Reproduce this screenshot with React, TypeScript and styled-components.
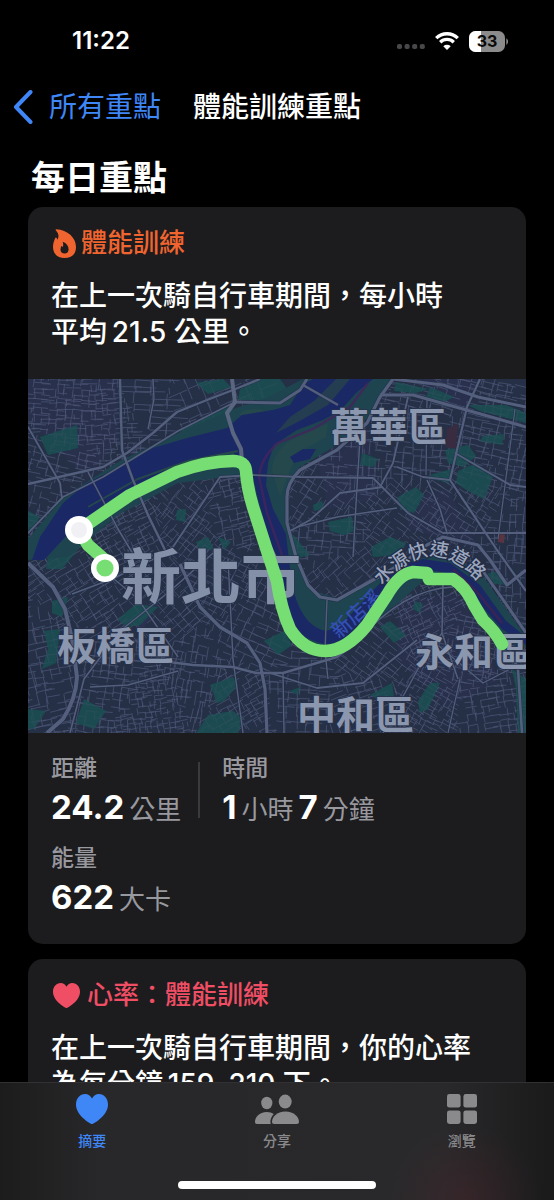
import React from 'react';
import styled, { createGlobalStyle } from 'styled-components';

const GlobalStyle = createGlobalStyle`
  *, *::before, *::after { box-sizing: border-box; }
  body {
    margin: 0;
    background: #000;
    color: #fff;
    font-family: "Inter", "Noto Sans CJK TC", sans-serif;
    -webkit-font-smoothing: antialiased;
  }
`;

const Screen = styled.div`
  display: flex;
  flex-direction: column;
  height: 100vh;
  background: #000;
`;

const StatusBar = styled.div`
  flex: none;
  display: flex;
  align-items: center;
  justify-content: space-between;
  height: 82px;
  padding: 0 46px 0 72px;
`;

const Clock = styled.time`
  font-size: 24px;
  font-weight: 600;
  line-height: 28px;
`;

const StatusIcons = styled.div`
  display: flex;
  align-items: center;
  gap: 10px;
`;

const NavBar = styled.nav`
  flex: none;
  display: flex;
  align-items: center;
  gap: 32px;
  height: 50px;
  padding: 0 13px;
`;

const BackLink = styled.a`
  display: flex;
  align-items: center;
  gap: 16px;
  color: #3f86f7;
  font-size: 28px;
  line-height: 40px;
  text-decoration: none;
`;

const NavTitle = styled.h1`
  margin: 0;
  font-size: 28px;
  font-weight: 500;
  line-height: 40px;
`;

const Content = styled.main`
  flex: 1;
  min-height: 0;
  overflow-y: auto;
  scrollbar-width: none;
  padding: 20px 28px 0;
`;

const SectionTitle = styled.h2`
  margin: 0 0 3px 3px;
  font-size: 34px;
  font-weight: 700;
  line-height: 52px;
`;

const Card = styled.article`
  margin-bottom: 15px;
  overflow: hidden;
  border-radius: 15px;
  background: #1c1c1e;
`;

const CardText = styled.div`
  padding: 20px 23px 29px;
`;

const CardTitle = styled.h3<{ $color: string; $gap: number }>`
  display: flex;
  align-items: center;
  gap: ${(p) => p.$gap}px;
  margin: 0 0 19px;
  padding-left: 2px;
  color: ${(p) => p.$color};
  font-size: 26px;
  font-weight: 500;
  line-height: 32px;
`;

const Summary = styled.p`
  margin: 0;
  font-size: 28px;
  font-weight: 500;
  line-height: 36px;
`;

const MapDrawing = styled.svg`
  display: block;
  width: 100%;
  height: auto;
  font-family: "Noto Sans CJK TC", sans-serif;
`;

const Stats = styled.dl`
  display: flex;
  flex-wrap: wrap;
  gap: 18px 0;
  margin: 0;
  padding: 22px 23px 27px;
`;

const Stat = styled.div<{ $wide?: boolean }>`
  flex: ${(p) => (p.$wide ? '1 0 60%' : 'none')};
`;

const StatDivider = styled.div`
  width: 2px;
  height: 56px;
  margin: 7px 22px 0 17px;
  background: #3a3a3c;
`;

const StatLabel = styled.dt`
  margin-bottom: 6px;
  color: #98989f;
  font-size: 23px;
  font-weight: 500;
  line-height: 26px;
`;

const StatValue = styled.dd`
  display: flex;
  align-items: baseline;
  height: 40px;
  margin: 0;
  line-height: 40px;
`;

const Amount = styled.span`
  font-size: 33px;
  font-weight: 700;
`;

const Unit = styled.span`
  margin: 0 5px;
  color: #98989f;
  font-size: 26px;

  &:last-child { margin-right: 0; }
`;

const TabBar = styled.footer`
  flex: none;
  border-top: 1px solid #313133;
  background:
    radial-gradient(circle at 84% 100%, rgba(90, 36, 44, 0.3), transparent 76px),
    linear-gradient(90deg, #1c1c1d, #28282a 18%, #29292b 80%, #1a1a1b);
`;

const Tabs = styled.nav`
  display: flex;
`;

const Tab = styled.button<{ $active?: boolean }>`
  flex: 1;
  display: flex;
  flex-direction: column;
  align-items: center;
  gap: 7px;
  padding: 11px 0 0;
  border: 0;
  background: none;
  color: ${(p) => (p.$active ? '#3f86f7' : '#8a8a8c')};
  font-family: inherit;
  font-size: 14px;
  font-weight: 500;
  line-height: 20px;
`;

const HomeIndicator = styled.div`
  width: 198px;
  height: 8px;
  margin: 30px auto 11px;
  border-radius: 4px;
  background: #fff;
`;

const HEART =
  'M16 30C13.5 29.3 0 21.2 0 10.4C0 4.3 4 0 9 0C12.1 0 14.7 1.7 16 4.6C17.3 1.7 19.9 0 23 0C28 0 32 4.3 32 10.4C32 21.2 18.5 29.3 16 30Z';

const HeartIcon = ({ width, height }: { width: number; height: number }) => (
  <svg width={width} height={height} viewBox="0 0 32 30" preserveAspectRatio="none" fill="currentColor" aria-hidden="true">
    <path d={HEART} />
  </svg>
);

const FlameIcon = () => (
  <svg width="23" height="29" viewBox="0 0 23 29" fill="currentColor" fillRule="evenodd" aria-hidden="true">
    <path d="M3.4 0.2C14.5 0.8 23 8.6 23 17.9C23 25 18.8 29 11.6 29C4.4 29 0 24.8 0 18C0 14.2 1.3 11.7 2.1 9.3C2.5 8.1 3.4 8.2 3.8 9.2L4.5 10.7C6.4 7.4 5.4 4 3.1 1.7C2.3 0.9 2.5 0.2 3.4 0.2ZM10.4 13C13.6 14.3 15.6 17.4 15.6 20.2C15.6 22.9 14 24.6 11.6 24.6C9.1 24.6 7.5 23 7.5 20.6C7.5 19.3 7.9 18.3 8.4 17.3C8.6 16.9 8.9 16.9 9.1 17.3L9.6 18.2C10.4 16.8 10.4 15.1 9.9 13.7C9.7 13.2 9.9 12.8 10.4 13Z" />
  </svg>
);

const PeopleIcon = () => (
  <svg width="44" height="30" viewBox="0 0 44 30" fill="currentColor" aria-hidden="true">
    <ellipse cx="11.8" cy="9" rx="5.6" ry="6.2" />
    <ellipse cx="30.2" cy="7.6" rx="6.5" ry="7" />
    <path d="M2 30C0.6 30 0 29.2 0 28C0 23.5 4.2 18 11.8 18C14.8 18 17 18.8 18.8 20.1C16.7 22.3 15.4 25.2 15.4 28C15.4 28.8 15.6 29.4 15.9 30Z" />
    <path d="M19.3 30C17.7 30 17 29.2 17 27.8C17 23.3 21.8 17.5 30.4 17.5C39.1 17.5 44 23.3 44 27.8C44 29.2 43.2 30 41.6 30Z" />
  </svg>
);

const GridIcon = () => (
  <svg width="30" height="30" viewBox="0 0 30 30" fill="currentColor" aria-hidden="true">
    <rect width="13.6" height="13.6" rx="2.4" />
    <rect x="16.4" width="13.6" height="13.6" rx="2.4" />
    <rect y="16.4" width="13.6" height="13.6" rx="2.4" />
    <rect x="16.4" y="16.4" width="13.6" height="13.6" rx="2.4" />
  </svg>
);

const CellularDots = () => (
  <svg width="28" height="18" viewBox="0 0 28 18" fill="#48484a" aria-hidden="true">
    {[0, 7.6, 15.2, 22.8].map((x) => (
      <rect key={x} x={x} y="12" width="5" height="5" rx="1.8" />
    ))}
  </svg>
);

const WifiIcon = () => (
  <svg width="24" height="18" viewBox="0 0 24 18" fill="none" stroke="#fff" strokeWidth="3.3" aria-hidden="true">
    <path d="M1.2 6.1A15.6 15.6 0 0 1 22.8 6.1" />
    <path d="M5.2 10.2A9.8 9.8 0 0 1 18.8 10.2" />
    <path d="M8.3 14.2A5.4 5.4 0 0 1 15.7 14.2L12 18Z" fill="#fff" stroke="none" />
  </svg>
);

const BatteryIcon = () => (
  <svg width="39" height="21" viewBox="0 0 39 21" role="img" aria-label="33%">
    <defs>
      <clipPath id="battery-shape">
        <rect width="36" height="21" rx="6.5" />
      </clipPath>
    </defs>
    <g clipPath="url(#battery-shape)">
      <rect width="36" height="21" fill="#8b8b8b" />
      <rect width="12" height="21" fill="#fff" />
    </g>
    <path d="M37.3 7.2C38.6 8 39 9.2 39 10.5S38.6 13 37.3 13.8Z" fill="#8b8b8b" />
    <text x="18" y="16.4" textAnchor="middle" fontFamily="Inter, sans-serif" fontSize="16" fontWeight="700" fill="#0a0a0a">
      33
    </text>
  </svg>
);

const BackChevron = () => (
  <svg width="20" height="34" viewBox="0 0 20 34" fill="none" stroke="currentColor" strokeWidth="4" strokeLinecap="round" strokeLinejoin="round" aria-hidden="true">
    <path d="M17.5 2L3 17L17.5 32" />
  </svg>
);

/* Street grids: each district fills the area nearest to its centre. */
type District = { x: number; y: number; angle: number; w: number; h: number };

const districts: District[] = [
  { x: 35, y: 25, angle: 2, w: 8, h: 5 },
  { x: 85, y: 45, angle: -3, w: 6, h: 5 },
  { x: 125, y: 30, angle: 3, w: 17, h: 6 },
  { x: 170, y: 22, angle: -22, w: 11, h: 14 },
  { x: 25, y: 95, angle: 14, w: 9, h: 6 },
  { x: 95, y: 150, angle: -28, w: 7, h: 5 },
  { x: 165, y: 140, angle: 38, w: 6, h: 7 },
  { x: 205, y: 130, angle: -14, w: 8, h: 5 },
  { x: 70, y: 215, angle: -33, w: 9, h: 6 },
  { x: 130, y: 225, angle: 48, w: 7, h: 10 },
  { x: 200, y: 205, angle: 28, w: 8, h: 6 },
  { x: 20, y: 290, angle: -12, w: 9, h: 7 },
  { x: 85, y: 300, angle: 8, w: 8, h: 7 },
  { x: 125, y: 322, angle: -8, w: 6, h: 5 },
  { x: 165, y: 300, angle: 10, w: 5, h: 9 },
  { x: 210, y: 320, angle: -30, w: 8, h: 6 },
  { x: 270, y: 318, angle: 4, w: 10, h: 8 },
  { x: 225, y: 255, angle: 24, w: 10, h: 7 },
  { x: 300, y: 120, angle: 32, w: 7, h: 8 },
  { x: 320, y: 85, angle: 3, w: 6, h: 9 },
  { x: 385, y: 55, angle: 5, w: 9, h: 7 },
  { x: 400, y: 10, angle: 14, w: 11, h: 6 },
  { x: 470, y: 75, angle: 12, w: 8, h: 6 },
  { x: 365, y: 150, angle: 38, w: 8, h: 6 },
  { x: 310, y: 155, angle: 4, w: 8, h: 7 },
  { x: 440, y: 135, angle: 32, w: 7, h: 6 },
  { x: 480, y: 165, angle: 3, w: 7, h: 8 },
  { x: 325, y: 195, angle: -40, w: 8, h: 7 },
  { x: 390, y: 235, angle: -25, w: 6, h: 5 },
  { x: 345, y: 275, angle: 38, w: 9, h: 6 },
  { x: 400, y: 325, angle: 30, w: 7, h: 5 },
  { x: 445, y: 275, angle: 12, w: 7, h: 5 },
  { x: 460, y: 330, angle: -10, w: 8, h: 6 },
  { x: 340, y: 325, angle: -18, w: 9, h: 7 },
];

const createRandom = (seed: number) => {
  let state = seed;
  return () => {
    state = (state * 1664525 + 1013904223) % 4294967296;
    return state / 4294967296;
  };
};

const nearest = (x: number, y: number) => {
  let best = 0;
  let min = Infinity;
  districts.forEach((d, i) => {
    const dist = (d.x - x) ** 2 + (d.y - y) ** 2;
    if (dist < min) {
      min = dist;
      best = i;
    }
  });
  return best;
};

const buildStreets = () => {
  const random = createRandom(41);
  const parts: string[] = [];
  districts.forEach((d, index) => {
    const rad = (d.angle * Math.PI) / 180;
    const at = (u: number, v: number) => [
      d.x + u * Math.cos(rad) - v * Math.sin(rad),
      d.y + u * Math.sin(rad) + v * Math.cos(rad),
    ];
    const add = (u: number, v: number, du: number, dv: number) => {
      const [mx, my] = at(u + du / 2, v + dv / 2);
      if (mx < -6 || mx > 504 || my < -6 || my > 360 || nearest(mx, my) !== index) return;
      const [x1, y1] = at(u, v);
      const [x2, y2] = at(u + du, v + dv);
      parts.push(`M${x1.toFixed(1)} ${y1.toFixed(1)}L${x2.toFixed(1)} ${y2.toFixed(1)}`);
    };
    for (let u = -70; u < 70; u += d.w) {
      for (let v = -70; v < 70; v += d.h) {
        const shift = (random() - 0.5) * 3;
        if (random() < 0.66) add(u, v + shift, d.w * (1 + random()), (random() - 0.5) * 2);
        if (random() < 0.56) add(u + shift, v, (random() - 0.5) * 2, d.h * (1 + random()));
      }
    }
  });
  return parts.join('');
};

const streets = buildStreets();

const parks = [
  'M12 58L49 46L50 69L20 76Z',
  'M168 4L195 0L203 8L180 15Z',
  'M212 10L232 0L252 0L262 14L250 22L210 21Z',
  'M150 52L200 28L202 46L170 56Z',
  'M0 132L12 138L4 150L0 152Z',
  'M20 178L45 160L52 168L34 190L18 190Z',
  'M149 131L158 130L157 143L148 141Z',
  'M168 163L180 158L186 170L172 172Z',
  'M190 158L203 163L196 171Z',
  'M16 252L32 250L28 284L14 290L20 270Z',
  'M90 240L108 225L130 228L112 246L98 248Z',
  'M56 320L78 332L66 350L48 344Z',
  'M0 330L18 332L6 350L0 350Z',
  'M182 306L205 298L210 306L196 322L188 324L186 316Z',
  'M168 354L180 336L205 332L215 340L210 354Z',
  'M24 222L40 218L34 238L24 234Z',
  'M236 262L256 252L264 266L250 276Z',
  'M334 74L350 80L345 88L332 86Z',
  'M370 118L388 108L396 116L386 134L372 130Z',
  'M300 143L324 138L326 152L316 156L302 152Z',
  'M343 168L362 158L378 164L372 176L345 178Z',
  'M282 176L262 152L256 160L262 181Z',
  'M368 3L400 10L388 14L366 12Z',
  'M402 8L426 18L416 23L398 18Z',
  'M440 26L478 26L498 34L498 44L452 32Z',
  'M455 57L476 55L474 66L452 62Z',
  'M417 71L440 66L448 77L436 88L420 84Z',
  'M430 92L448 84L465 98L456 120L440 112L428 104Z',
  'M402 96L424 90L421 104L404 100Z',
  'M352 248L362 242L378 256L366 264Z',
  'M390 322L402 304L412 304L400 330L392 334Z',
  'M342 316L364 304L366 318L350 320Z',
  'M387 222L395 225L392 234L385 230Z',
  'M455 196L470 192L478 206L462 204Z',
  'M484 290L498 300L498 354L490 354L488 310Z',
  'M262 312L272 308L270 316Z',
  'M285 126L294 122L296 130L286 132Z',
];

const majorRoads: { d: string; w: number }[] = [
  { d: 'M0 105L75 88L99 74L125 54L149 33L179 21L205 11L232 0', w: 2.4 },
  { d: 'M92 0L94 71L105 101L120 136L137 171', w: 2.4 },
  { d: 'M152 185L172 228L192 248L219 264L232 284L237 310L239 354', w: 3.2 },
  { d: 'M207 23L252 24L272 11L279 0', w: 3 },
  { d: 'M0 48L32 104L34 120', w: 1.8 },
  { d: 'M0 154L35 118L75 98L150 52L205 24', w: 1.8 },
  { d: 'M60 93L90 150L105 175', w: 1.6 },
  { d: 'M145 168L192 98L225 96L272 98L345 99L380 134L415 154L498 154', w: 1.8 },
  { d: 'M125 0L126 20L120 50', w: 1.4 },
  { d: 'M365 0L352 18L339 44L309 71L272 91Q259 104 259 118L259 144L268 178L280 206L292 218L309 221L345 201L375 184L399 166L415 158L450 166L462 181L479 206L498 191', w: 3.2 },
  { d: 'M365 0L415 6L450 18L498 28', w: 3 },
  { d: 'M352 16L385 16L449 34L498 48', w: 3 },
  { d: 'M452 0L439 28L422 101L469 171L498 212', w: 2.2 },
  { d: 'M427 74L482 106L498 108', w: 2 },
  { d: 'M275 6L310 26', w: 2.4 },
  { d: 'M380 18L365 84L352 108', w: 1.8 },
  { d: 'M262 152L282 141L312 114L355 108', w: 1.8 },
  { d: 'M332 60L329 108L325 178', w: 1.4 },
  { d: 'M399 101L412 130L419 154', w: 1.6 },
  { d: 'M369 88L395 98L422 101', w: 1.8 },
  { d: 'M269 148L309 138L369 129', w: 1.6 },
  { d: 'M399 20L398 96', w: 1.2 },
  { d: 'M487 30L470 160', w: 1.2 },
  { d: 'M0 184L25 208L37 230L44 260L49 298Q48 320 35 340L19 354', w: 4 },
  { d: 'M42 354L56 300L92 252L142 212L192 168', w: 1.6 },
  { d: 'M44 215L84 200L130 178', w: 1.4 },
  { d: 'M80 195L110 220L150 278', w: 1.4 },
  { d: 'M125 281L165 286L205 288L228 294L255 294L309 278L330 262', w: 2.4 },
  { d: 'M62 308L100 306L150 292', w: 1.4 },
  { d: 'M200 180L205 280L215 354', w: 1.4 },
  { d: 'M242 294L289 309L335 304L389 261', w: 1.8 },
  { d: 'M299 221L297 272L300 300', w: 1.4 },
  { d: 'M255 294L256 354', w: 1.4 },
  { d: 'M415 204L414 254L430 300', w: 1.6 },
  { d: 'M330 262Q375 210 425 208', w: 1.6 },
  { d: 'M452 188L476 222L498 254', w: 3 },
  { d: 'M478 262L490 290L494 354', w: 2.6 },
  { d: 'M355 354L390 290L414 254', w: 1.4 },
  { d: 'M405 262L455 304L482 290', w: 1.4 },
  { d: 'M420 354L432 300', w: 1.2 },
];

const RouteMap = () => (
  <MapDrawing viewBox="0 0 498 354" role="img" aria-label="騎自行車路線">
    <defs>
      <path id="expressway-label" d="M354 207Q379 176 408 177Q434 180 459 214" />
    </defs>
    <rect width="498" height="354" fill="#253046" />
    <g fill="#2c3052">
      <path d="M0 0H90V60L60 100L0 40Z" opacity="0.5" />
      <path d="M280 40L340 50L350 120L300 130Z" opacity="0.5" />
      <path d="M395 0H450L440 30L400 20Z" opacity="0.6" />
      <path d="M370 220L440 214L470 300L420 330L370 280Z" opacity="0.5" />
      <path d="M100 235L130 225L115 250Z" />
      <path d="M380 120L420 110L450 170L380 150Z" opacity="0.5" />
    </g>
    <g fill="#1b4b50">
      {parks.map((d) => (
        <path key={d} d={d} />
      ))}
    </g>
    <path d={streets} fill="none" stroke="#4c5677" strokeWidth="0.9" opacity="0.8" />
    <g fill="#1b4b50" opacity="0.65">
      {parks.map((d) => (
        <path key={d} d={d} />
      ))}
    </g>
    <path d="M419 50L430 44L428 70L418 68Z" fill="#3a2c40" />
    <path d="M470 154L477 154L476 164L470 163Z" fill="#5a3440" />

    {/* river banks and islands */}
    <path d="M0 160L35 118L92 82L150 54L205 30L240 18L275 0H365L345 34L309 66L272 88Q250 110 262 150L268 181L285 212L309 219L345 200L372 182L415 176L450 190L498 258L498 268L470 262L430 206L395 202L330 260L300 275L268 262L248 200L228 130L215 96L150 104L90 136L40 178L0 181Z" fill="#1e4450" />
    <path d="M212 34Q225 26 245 34L228 40L216 48Z" fill="#25484c" />
    <path
      d="M4 181L12 158L35 124L59 104L92 88L125 69L159 59L199 49L214 36L245 31L262 26L275 6L285 0H345L328 14L312 32L295 41L269 51L246 66L240 84L238 106L245 130L258 155L262 190L266 214Q276 248 298 252Q312 250 342 214L372 186L395 180L422 184L452 206L478 242L498 258V266L474 250L446 218L420 194L395 190L350 224L318 260L298 266L270 256L258 228L244 170L230 120L222 84L205 74L179 77L139 92L102 110L75 126L40 155L16 181Z"
      fill="#1b2866"
    />
    <path d="M286 22L308 0H322L300 26L268 44L248 54L262 38Z" fill="#26414d" opacity="0.85" />
    <path d="M244 92Q244 70 272 56L300 44L298 58L270 74L262 92L252 118Z" fill="#24484b" />
    <path d="M262 78L275 70L288 70L282 80L266 84Z" fill="#1b2866" />
    <path d="M340 4L322 28L285 50L250 64Q232 80 231 98L239 134L254 176" fill="none" stroke="#44245c" strokeWidth="2.4" opacity="0.8" />
    <path d="M425 190L450 214L474 244" fill="none" stroke="#3a2454" strokeWidth="2.4" />
    <path d="M60 128L110 100L160 82L210 72" fill="none" stroke="#25484b" strokeWidth="2" />

    <g fill="none" stroke="#222c44" strokeLinejoin="round">
      {majorRoads.map((r) => (
        <path key={r.d} d={r.d} strokeWidth={r.w + 1.2} opacity="0.6" />
      ))}
    </g>
    <g fill="none" stroke="#535f7c" strokeLinejoin="round">
      {majorRoads.map((r) => (
        <path key={r.d} d={r.d} strokeWidth={r.w} />
      ))}
      <path d="M204 0L207 23L199 34L205 54L213 70L214 82" strokeWidth="4" stroke="#5a667f" />
    </g>

    <g fill="#8b97ae" stroke="#27324a" strokeWidth="1.4" paintOrder="stroke" fontSize="39" fontWeight="700">
      <text x="302" y="62">萬華區</text>
      <text x="29" y="281">板橋區</text>
      <text x="387" y="287">永和區</text>
      <text x="269" y="350">中和區</text>
      <text x="93" y="220" fontSize="60" fill="#8390a8">新北市</text>
    </g>
    <text transform="translate(311 260) rotate(-42)" fontSize="20" fontWeight="500" fill="#3450b4">
      新店溪
    </text>
    <text fontSize="19" fill="#9aa5bd" stroke="#222c46" strokeWidth="2.5" paintOrder="stroke" fontWeight="500">
      <textPath href="#expressway-label">水源快速道路</textPath>
    </text>

    <g fill="none" stroke="#76de72" strokeWidth="12.5" strokeLinecap="round" strokeLinejoin="round">
      <path d="M51 151L102 116L149 93Q179 82 205 82Q217 82 218 92Q219 108 225 128L241 178L249 202Q253 230 262 250Q276 272 297 272Q318 272 339 246L359 216Q371 195 385 193L399 194L401 200L425 200Q438 208 446 226L455 241Q467 252 474 265" />
      <path d="M51 151L60 166L77 181" />
    </g>
    <circle cx="51" cy="151" r="14" fill="#fff" />
    <circle cx="51" cy="151" r="8" fill="#f1f0f5" />
    <circle cx="77" cy="189" r="14" fill="#fff" />
    <circle cx="77" cy="189" r="8.6" fill="#76de72" />
  </MapDrawing>
);

export default function App() {
  return (
    <Screen lang="zh-TW">
      <GlobalStyle />
      <StatusBar>
        <Clock>11:22</Clock>
        <StatusIcons>
          <CellularDots />
          <WifiIcon />
          <BatteryIcon />
        </StatusIcons>
      </StatusBar>
      <NavBar>
        <BackLink href="#highlights">
          <BackChevron />
          所有重點
        </BackLink>
        <NavTitle>體能訓練重點</NavTitle>
      </NavBar>
      <Content>
        <SectionTitle>每日重點</SectionTitle>
        <Card>
          <CardText>
            <CardTitle $color="#f0652f" $gap={5}>
              <FlameIcon />
              體能訓練
            </CardTitle>
            <Summary>
              在上一次騎自行車期間，每小時
              <br />
              平均&thinsp;21.5 公里。
            </Summary>
          </CardText>
          <RouteMap />
          <Stats>
            <Stat>
              <StatLabel>距離</StatLabel>
              <StatValue>
                <Amount>24.2</Amount>
                <Unit>公里</Unit>
              </StatValue>
            </Stat>
            <StatDivider />
            <Stat>
              <StatLabel>時間</StatLabel>
              <StatValue>
                <Amount>1</Amount>
                <Unit>小時</Unit>
                <Amount>7</Amount>
                <Unit>分鐘</Unit>
              </StatValue>
            </Stat>
            <Stat $wide>
              <StatLabel>能量</StatLabel>
              <StatValue>
                <Amount>622</Amount>
                <Unit>大卡</Unit>
              </StatValue>
            </Stat>
          </Stats>
        </Card>
        <Card>
          <CardText>
            <CardTitle $color="#f04e64" $gap={7}>
              <HeartIcon width={27} height={25} />
              心率：體能訓練
            </CardTitle>
            <Summary>
              在上一次騎自行車期間，你的心率
              <br />
              為每分鐘&thinsp;159–210 下。
            </Summary>
          </CardText>
        </Card>
      </Content>
      <TabBar>
        <Tabs>
          <Tab $active type="button">
            <HeartIcon width={32} height={30} />
            摘要
          </Tab>
          <Tab type="button">
            <PeopleIcon />
            分享
          </Tab>
          <Tab type="button">
            <GridIcon />
            瀏覽
          </Tab>
        </Tabs>
        <HomeIndicator />
      </TabBar>
    </Screen>
  );
}
